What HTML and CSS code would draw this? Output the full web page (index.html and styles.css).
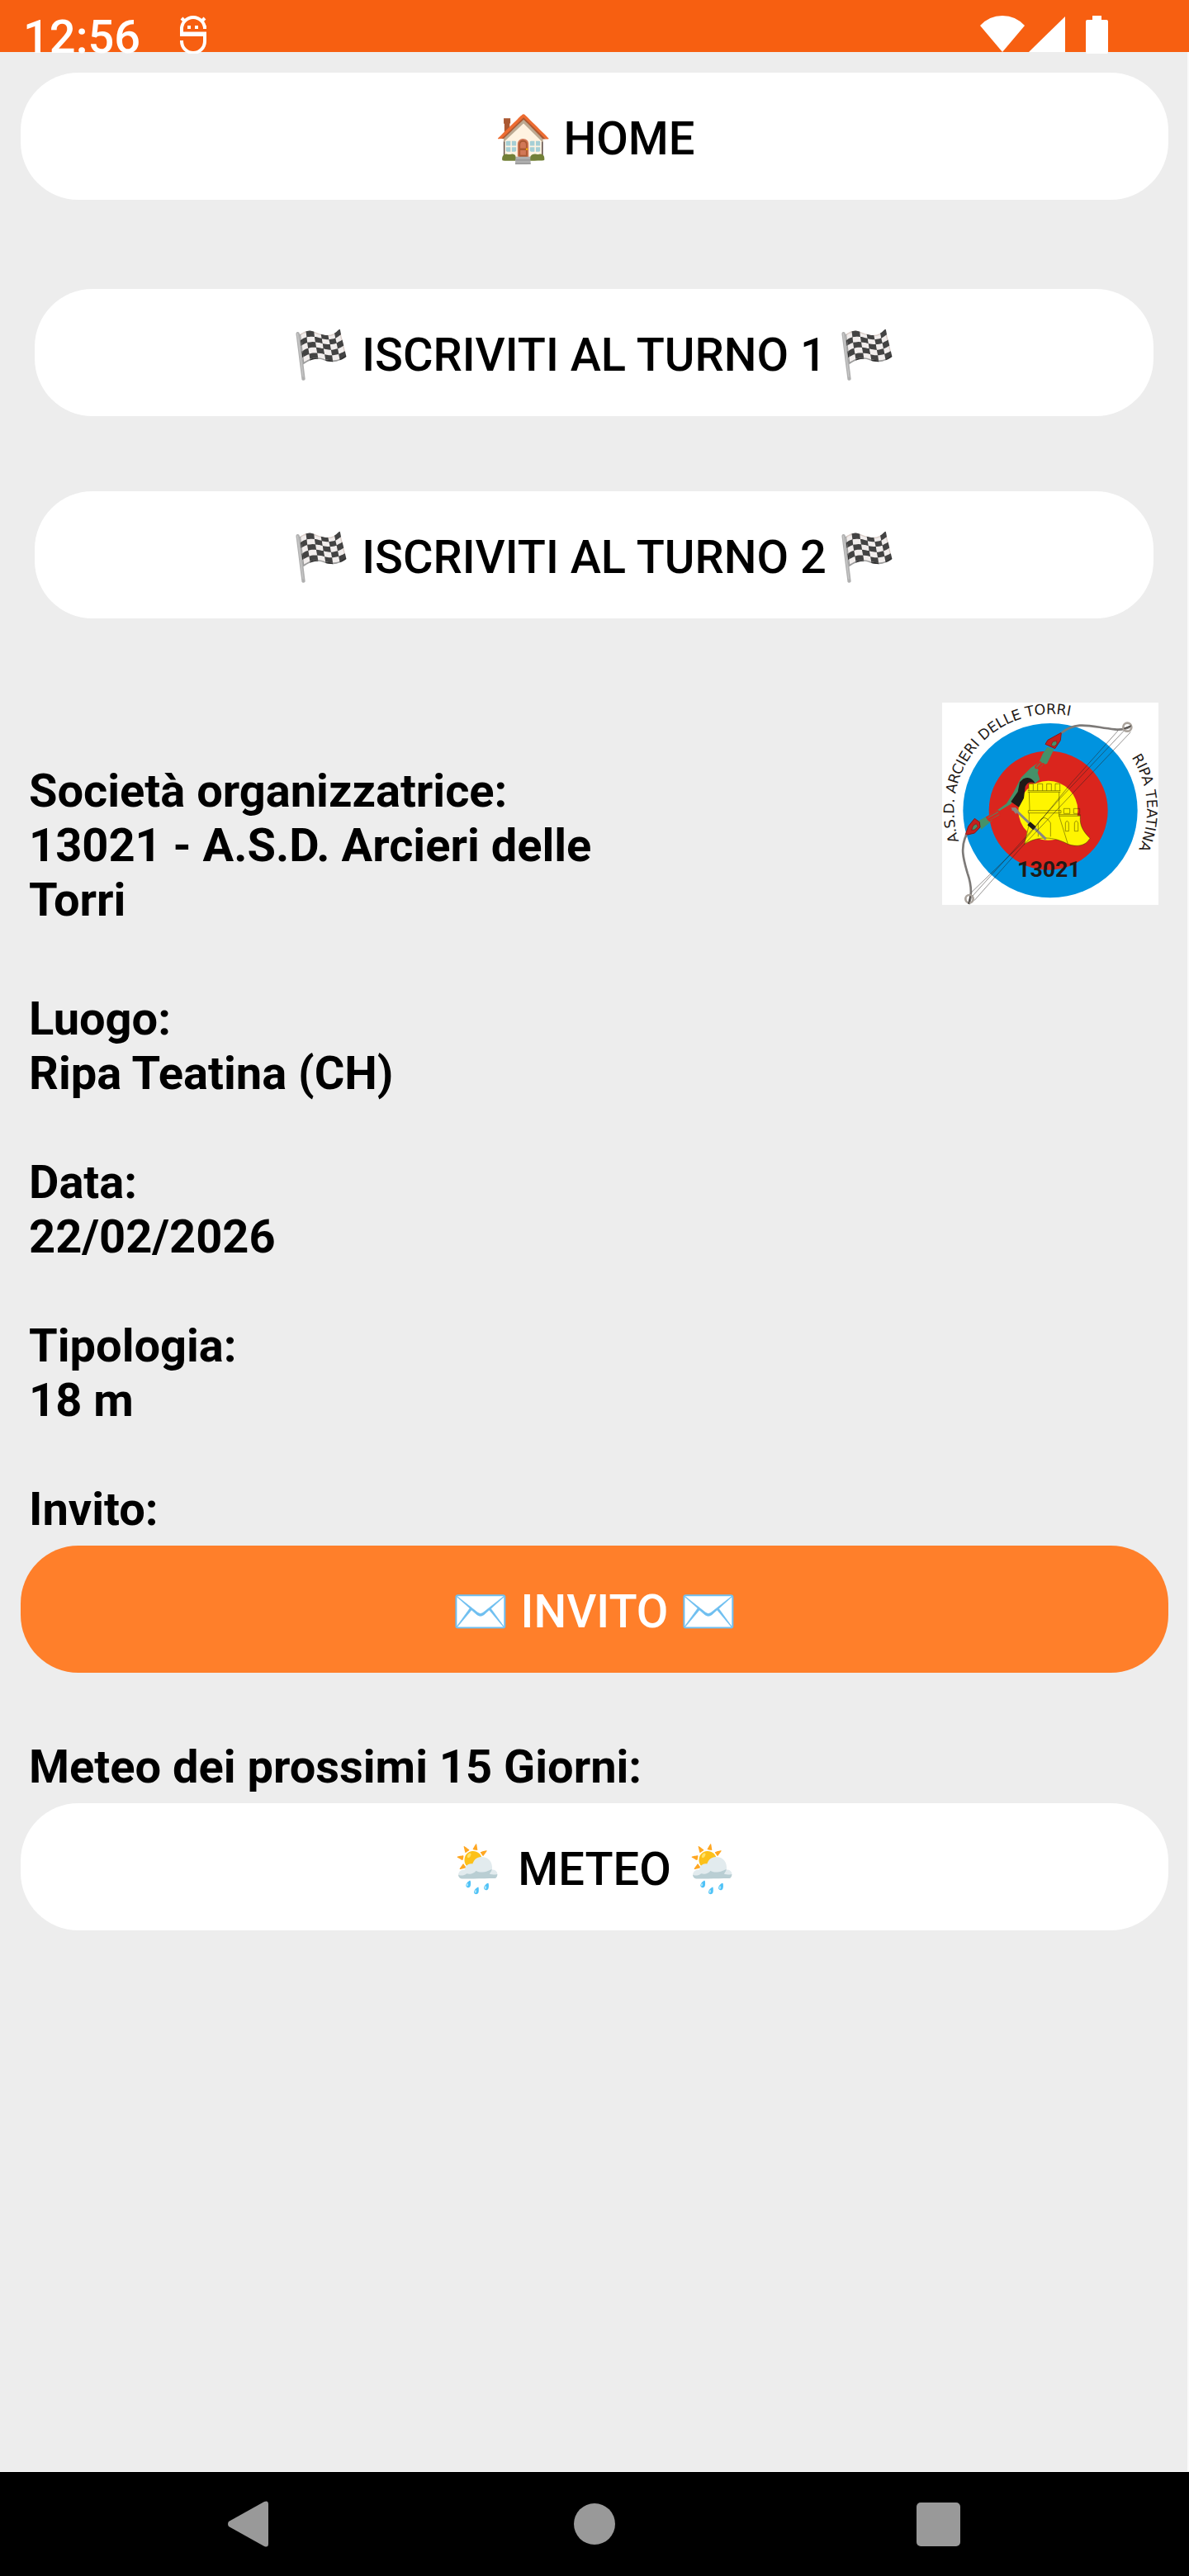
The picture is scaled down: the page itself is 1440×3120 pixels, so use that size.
FILE: index.html
```html
<!DOCTYPE html>
<html lang="it">
<head>
<meta charset="utf-8">
<meta name="viewport" content="width=device-width, initial-scale=1">
<title>Iscrizione gara</title>
<link rel="stylesheet" href="styles.css">
</head>
<body>
<header class="status">
  <div class="status-left">
    <span class="clock">12:56</span>
    <svg class="status-icon" width="32" height="46" viewBox="0 0 32 46" fill="none" stroke="#fff" stroke-width="4" aria-hidden="true">
      <path d="M2 24V16a14 14 0 0 1 28 0M2 14V23H30V31a14 14 0 0 1-28 0V30M28 14H32M26 23H32"/>
      <path d="M2 3L6 7M30 3L26 7"/>
      <path d="M0 22H32" stroke-width="5"/>
      <path d="M11 12V16M20 12V16"/>
    </svg>
  </div>
  <div class="status-right" aria-hidden="true">
    <svg class="status-icon" width="54" height="46" viewBox="0 0 54 46" fill="#fff"><path d="M0 12Q11 0 27 0T54 12L27 44Z"/></svg>
    <svg class="status-icon" width="44" height="46" viewBox="0 0 44 46" fill="#fff"><path d="M44 1V44H0Z"/></svg>
    <svg class="status-icon battery" width="27" height="46" viewBox="0 0 27 46" fill="#fff"><path d="M8 0H19V5H25a2 2 0 0 1 2 2V44a2 2 0 0 1-2 2H2a2 2 0 0 1-2-2V7a2 2 0 0 1 2-2H8Z"/></svg>
  </div>
</header>
<main class="content">
  <button class="pill" type="button">🏠 HOME</button>
  <div class="turns">
    <button class="pill" type="button">🏁 ISCRIVITI AL TURNO 1 🏁</button>
    <button class="pill" type="button">🏁 ISCRIVITI AL TURNO 2 🏁</button>
  </div>
  <section class="organizer">
    <p class="organizer-name">Società organizzatrice:<br>13021 - A.S.D. Arcieri delle Torri</p>
    <svg class="club-logo" width="262" height="245" viewBox="63 63 786 735" role="img" aria-label="A.S.D. Arcieri delle Torri, Ripa Teatina">
      <defs>
        <path id="arc-club" d="M124 567A350 350 0 0 1 790 344"/>
        <path id="arc-town" d="M751 262A349 349 0 0 1 720 684"/>
      </defs>
      <rect x="63" y="63" width="786" height="735" fill="#fff"/>
      <circle cx="456" cy="455" r="317" fill="#0093df"/>
      <circle cx="449" cy="455" r="216" fill="#da251d"/>
      <circle cx="448" cy="455" r="108" fill="#fff500"/>
      <path d="M378 358H490V472L565 474C562 510 575 530 600 556C585 585 550 588 520 577C470 550 410 545 362 578L376 510Z" fill="#fff500"/>
      <g fill="none" stroke="#3a3700" stroke-width="1.500">
        <path d="M378 383V358H394V383M410 383V358H428V383M443 383V358H460V383M474 383V358H491V383M374 383H493M374 388H493M379 388L381 455M488 388V474M376 455H495V464H376ZM379 464V505L362 578C410 545 470 550 520 577L488 474M487 470H565V475H487M505 466V448H527V466ZM541 466V448H563V466ZM511 530V500Q517 486 523 500V530ZM544 530V500Q550 486 557 500V530ZM412 550V500Q434 462 457 500V550M565 475C562 510 575 530 600 556C585 585 550 588 520 577"/>
      </g>
      <path d="M445 224L470 232L444 285L418 291L410 318L418 342L399 358Q380 332 365 345L345 392L312 432L268 458L245 491L205 524L192 494L255 460L297 430L322 390L350 335L385 300L415 280L428 250Z" fill="#459169"/>
      <path d="M358 340Q385 327 401 356Q376 345 365 368L360 410L342 443L313 423L338 387L345 352Z" fill="#1f1a17"/>
      <path d="M402 296L417 280Q424 278 422 286L408 301Q402 303 402 296ZM413 302L428 285Q434 284 432 290L418 305Q412 306 413 302ZM225 480L266 456Q272 458 268 464L229 486ZM231 489L271 466Q276 469 271 474L236 493Z" fill="#459169" stroke="#da251d" stroke-width="5"/>
      <path d="M496 172L493 200L473 230L438 214L447 199ZM181 484L199 497L201 516L181 537L147 545L158 513Z" fill="#c4201d" stroke="#8d1714" stroke-width="3"/>
      <path d="M465 205L479 202L480 214L470 222L459 218ZM176 510L187 503L193 513L181 525L170 526Z" fill="#459169" stroke="#7b1715" stroke-width="2"/>
      <g fill="none">
        <path d="M497 173C555 125 610 153 690 160Q725 164 750 148M152 543C126 590 143 640 155 682Q177 745 161 795" stroke="#7d7a78" stroke-width="8"/>
        <path d="M317 450L330 453L440 559" stroke="#898681" stroke-width="9"/>
        <path d="M378 502L399 520" stroke="#1f1a17" stroke-width="16"/>
        <circle cx="736" cy="152" r="15" stroke="#aaa39c" stroke-width="8"/>
        <circle cx="162" cy="776" r="14" stroke="#aaa39c" stroke-width="8"/>
        <path d="M702 165L535 352L350 578L170 752M724 165L490 413L350 570L174 765M748 170L350 590L180 782" stroke="#292522" stroke-width="1.500"/>
        <path d="M724 157L750 147M159 795L165 766" stroke="#403c39" stroke-width="4"/>
      </g>
      <path d="M313 445L330 444L341 455L331 468Z" fill="#898681"/>
      <text class="logo-arc"><textPath href="#arc-club">A.S.D. ARCIERI DELLE TORRI</textPath></text>
      <text class="logo-arc"><textPath href="#arc-town">RIPA TEATINA</textPath></text>
      <text class="logo-code" x="451" y="697" text-anchor="middle">13021</text>
    </svg>
  </section>
  <section class="details">
    <p>Luogo:<br>Ripa Teatina (CH)</p>
    <p>Data:<br>22/02/2026</p>
    <p>Tipologia:<br>18 m</p>
    <p>Invito:</p>
  </section>
  <button class="pill pill-accent" type="button">✉️ INVITO ✉️</button>
  <p class="weather-label">Meteo dei prossimi 15 Giorni:</p>
  <button class="pill" type="button">🌦️ METEO 🌦️</button>
</main>
<nav class="system-nav" aria-label="Navigazione">
  <button class="nav-button" type="button" aria-label="Indietro"><svg width="56" height="56" viewBox="0 0 56 56" fill="#999"><path d="M1 25L44 1Q49-1 49 4V52Q49 57 44 55L1 31Q-1 28 1 25Z"/></svg></button>
  <button class="nav-button" type="button" aria-label="Schermata principale"><svg width="56" height="56" viewBox="0 0 56 56" fill="#999"><circle cx="28" cy="28" r="25"/></svg></button>
  <button class="nav-button" type="button" aria-label="Recenti"><svg width="56" height="56" viewBox="0 0 56 56" fill="#999"><rect x="2" y="2" width="53" height="53" rx="5"/></svg></button>
</nav>
</body>
</html>
```
FILE: styles.css
```css
* { box-sizing: border-box; }

body {
  margin: 0;
  min-height: 100vh;
  display: flex;
  flex-direction: column;
  background: #ededed;
  color: #000;
  font: 700 56px/66px Roboto, sans-serif;
}

p { margin: 0; }

.status {
  height: 63px;
  padding: 12px 98px 0 28px;
  display: flex;
  justify-content: space-between;
  background: #f75f11;
  color: #fff;
  font-weight: 500;
}

.status-left,
.status-right {
  display: flex;
  align-items: flex-start;
}

.status-left { gap: 48px; }
.status-right { gap: 5px; }
.status-icon { margin-top: 7px; flex: none; }
.battery { margin-left: 20px; }

.content {
  flex: 1;
  padding: 25px 23px 25px 25px;
  border: solid #fafafa;
  border-width: 0 2px 1px 0;
}

.pill {
  display: block;
  width: 100%;
  height: 154px;
  padding: 5px 0 0;
  border: 0;
  border-radius: 70px;
  background: #fff;
  color: #000;
  font: 500 56px/66px Roboto, sans-serif;
}

.pill-accent {
  margin: 11px 0 81px;
  background: #ff7f2a;
  color: #fff;
}

.turns {
  margin: 108px 18px 102px 17px;
  display: grid;
  gap: 91px;
}

.organizer {
  padding: 0 12px 78px 10px;
  display: flex;
  justify-content: space-between;
  align-items: flex-start;
}

.organizer-name {
  width: 52%;
  padding-top: 74px;
}

.club-logo {
  flex: none;
  overflow: visible;
}

.logo-arc {
  fill: #1f1a17;
  font: 400 52px "DejaVu Sans", sans-serif;
}

.logo-code {
  fill: #1f1a17;
  font: 700 80px Roboto, sans-serif;
}

.details {
  padding-left: 10px;
  display: grid;
  gap: 66px;
}

.weather-label { padding: 0 0 11px 10px; }

.system-nav {
  height: 126px;
  display: flex;
  align-items: center;
  justify-content: center;
  gap: 360px;
  background: #000;
}

.nav-button {
  padding: 0;
  border: 0;
  background: none;
  line-height: 0;
}

.nav-button svg { display: block; }
```
